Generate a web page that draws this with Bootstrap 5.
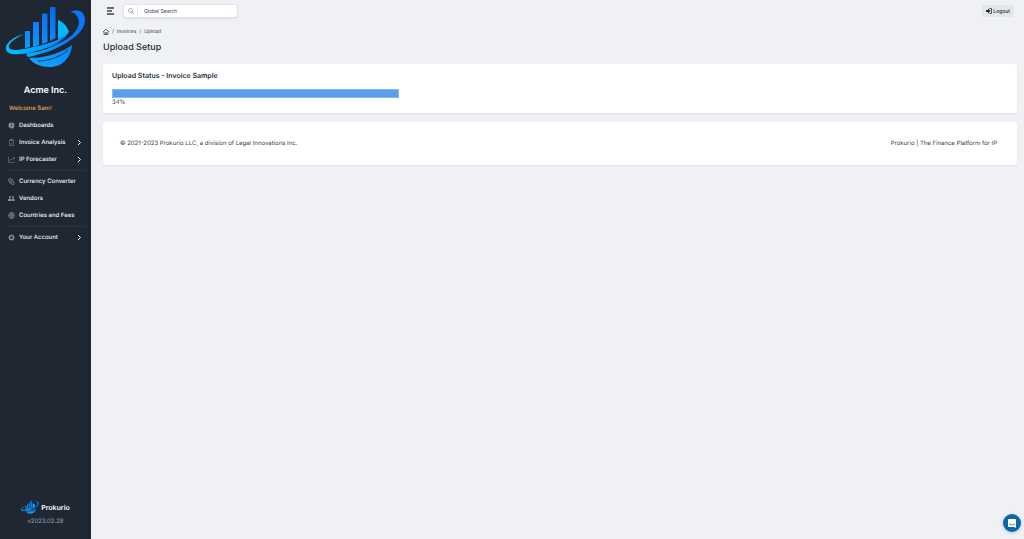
<!DOCTYPE html>
<html lang="en">
<head>
<meta charset="utf-8">
<meta name="viewport" content="width=device-width, initial-scale=1">
<title>Upload Setup</title>
<link href="https://cdn.jsdelivr.net/npm/bootstrap@5.3.0/dist/css/bootstrap.min.css" rel="stylesheet">
<style>
body{font-family:Inter,"Liberation Sans",sans-serif;font-size:6px;line-height:8px;background:#eff1f5;color:#374151;text-rendering:geometricPrecision}
a{color:inherit;text-decoration:none}
svg{display:block;flex:none}
.side{width:91px;background:#1f2733;color:#fff}
.side-logo{margin:6px 5px 0}
.brand{font-size:9px;line-height:12px;font-weight:600;margin-top:17px}
.welcome{color:#e8a857;margin:8px 9px 4px;font-weight:500}
.side-link{display:flex;align-items:center;height:17px;padding:0 8px;font-weight:500;color:#f3f4f6}
.side-link svg:first-child{width:7px;height:7px;margin-right:4px;color:#8b93a0}
.side-link .chev{width:5px;height:7px;margin-left:auto;margin-right:1px}
.rule{border-top:1px solid #2a323e;margin:2px 5px}
.brand-sm{font-size:7px;line-height:16px;font-weight:600;gap:2px}
.version{color:#9ca3af;margin:2px 0 13px}
.page{padding:4px 7px 0 12px}
.search{width:115px;height:14px;border:1px solid #dfe2e8;border-radius:3px;background:#fff;box-shadow:0 1px 2px #0001;margin-left:8px}
.search label{width:14px;border-right:1px solid #e5e7eb}
.search input{font-size:5px;line-height:8px;color:#374151;padding:0 6px;border:0;outline:0;min-width:0;background:none}
.search input::placeholder{color:#374151;opacity:1}
.menu-btn{border:0;background:none;padding:0;margin-left:3px}
.logout{font-size:5px;line-height:8px;font-weight:500;background:#e3e6eb;color:#1f2937;border:0;border-radius:3px;padding:2px 4px;height:12px;margin-right:3px}
.crumbs{font-size:5px;margin-top:10px;gap:3px}
h1{font-size:9px;line-height:12px;font-weight:500;margin:6px 0 10px;color:#262f3d}
h2{font-size:7px;line-height:10px;font-weight:600;margin:0;color:#262f3d}
.panel{background:#fff;border-radius:3px;box-shadow:0 1px 2px #0001}
.status{padding:7px 9px 6px;margin-bottom:9px}
.bar{height:9px;background:#5a9deb;border:1px solid #83b7f3;margin:8px 0 1px}
.foot{padding:18px 20px 17px 17px}
.chat{position:fixed;right:3px;bottom:7px;width:18px;height:18px;border:0;border-radius:50%;background:#0b67a8;padding:0;box-shadow:0 1px 4px #0003}
</style>
</head>
<body>
<svg width="0" height="0" class="position-absolute" aria-hidden="true">
<defs>
<linearGradient id="blue" gradientUnits="userSpaceOnUse" x1="28" y1="66" x2="60" y2="10"><stop offset="0" stop-color="#12a8ff"/><stop offset="1" stop-color="#0668f5"/></linearGradient>
<linearGradient id="ring" gradientUnits="userSpaceOnUse" x1="5" y1="50" x2="70" y2="30"><stop offset="0" stop-color="#00c2ff"/><stop offset="1" stop-color="#0878ff"/></linearGradient>
<symbol id="logo" viewBox="5 6 81 62">
<g fill="url(#blue)"><path d="M25 31h5v16l-5 1z"/><path d="M33 22h6v23l-6 2z"/><path d="M42 13.500h5.500V42L42 44z"/><path d="M50 7h5.500v31L50 41z"/></g>
<path fill="#00baff" d="M58 20c5 2 9 6 11 12-3 4-7 6-11 8z"/>
<path fill="url(#ring)" d="M25 34C14 36 5 43 6 49c1 7 14 6 26 3 14-3 27-7 37-19-12 9-26 12-40 15-9 2-18 3-20 0-2-4 6-10 16-14z"/>
<path fill="url(#ring)" d="M26 55c16-3 29-8 41-16 10-7 14-15 11-21-2-4-4-6-8-6 8-3 13-1 14.500 5 2 8-4 16-12.500 22-13 10-29 15-44 18z"/>
<path fill="url(#ring)" d="M26 53c15-1 28-5 38-14-8 9-22 14-36 16z"/>
<path fill="url(#blue)" d="M29 58c13 0 29-3 43-13-1 13-10 22-22 22-9 0-17-3-21-9z"/>
<path fill="none" stroke="#1f2733" stroke-width=".8" d="M38 61c11 0 22-4 30-11"/>
</symbol>
</defs>
</svg>
<div class="d-flex min-vh-100">
<aside class="side d-flex flex-column flex-shrink-0">
<svg width="81" height="62" class="side-logo" role="img" aria-label="Acme logo"><use href="#logo"/></svg>
<div class="brand text-center">Acme Inc.</div>
<div class="welcome">Welcome Sam!</div>
<nav>
<a class="side-link" href="#"><svg viewBox="0 0 14 14"><circle cx="7" cy="7" r="6" fill="currentColor"/><path d="M7 1v6l6 1M7 7l-4 5" fill="none" stroke="#1f2733"/></svg>Dashboards</a>
<a class="side-link" href="#"><svg viewBox="0 0 14 14" fill="none" stroke="currentColor"><path d="M3 2h8v11H3zM5 1h4v2H5zM5 9l1 2 3-4"/></svg>Invoice Analysis<svg class="chev" viewBox="0 0 5 7" fill="none" stroke="currentColor"><path d="m1 1 2.500 2.500L1 6"/></svg></a>
<a class="side-link" href="#"><svg viewBox="0 0 14 14" fill="none" stroke="currentColor"><path d="M1 1v12h12M3 9l3-3 2 2 5-5M10 3h3v3"/></svg>IP Forecaster<svg class="chev" viewBox="0 0 5 7" fill="none" stroke="currentColor"><path d="m1 1 2.500 2.500L1 6"/></svg></a>
<div class="rule"></div>
<a class="side-link" href="#"><svg viewBox="0 0 14 14" fill="none" stroke="currentColor" stroke-width="1.500"><circle cx="4" cy="4" r="3"/><rect x="7" y="7" width="5" height="6" rx="2"/><path d="M2 8l4 3M8 2l3 3"/></svg>Currency Converter</a>
<a class="side-link" href="#"><svg viewBox="0 0 14 14" fill="currentColor"><circle cx="4" cy="4" r="2"/><circle cx="10" cy="4" r="2"/><path d="M0 12V9l2-2h3l1 2v3zM7 12V9l1-2h3l2 2v3z"/></svg>Vendors</a>
<a class="side-link" href="#"><svg viewBox="0 0 14 14" fill="none" stroke="currentColor"><circle cx="7" cy="7" r="6"/><ellipse cx="7" cy="7" rx="3" ry="6"/><path d="M1 7h12M2 4h10M2 10h10M7 1v12"/></svg>Countries and Fees</a>
<div class="rule"></div>
<a class="side-link" href="#"><svg viewBox="0 0 14 14" fill="none" stroke="currentColor"><circle cx="7" cy="7" r="4" stroke-width="2.500"/><path stroke-width="2" d="M7 1v2M7 11v2M1 7h2M11 7h2M3 3l1 1M10 10l1 1M11 3l-1 1M4 10l-1 1"/></svg>Your Account<svg class="chev" viewBox="0 0 5 7" fill="none" stroke="currentColor"><path d="m1 1 2.500 2.500L1 6"/></svg></a>
</nav>
<div class="mt-auto text-center">
<div class="brand-sm d-flex justify-content-center"><svg width="18" height="14" aria-hidden="true"><use href="#logo"/></svg>Prokurio</div>
<div class="version">v2023.02.28</div>
</div>
</aside>
<main class="page flex-grow-1">
<header class="d-flex align-items-center">
<button class="menu-btn" aria-label="Toggle menu"><svg width="9" height="8" viewBox="0 0 9 8" stroke="#374151" stroke-width="1.300"><path d="M1 1h7M1 4h5M1 7h7"/></svg></button>
<form class="search d-flex">
<label for="q" class="d-flex align-items-center justify-content-center flex-shrink-0" aria-label="Search"><svg width="6" height="6" viewBox="0 0 12 12" fill="none" stroke="#6b7280" stroke-width="1.200"><circle cx="5" cy="5" r="4"/><path d="m8 8 4 4"/></svg></label>
<input id="q" class="flex-grow-1" type="search" placeholder="Global Search">
</form>
<button class="logout ms-auto d-flex align-items-center"><svg width="6" height="6" viewBox="0 0 12 12"><path fill="#1f2937" d="M0 4h4V1l5 5-5 5V8H0z"/><path d="M7 1h4v10H7" fill="none" stroke="#1f2937" stroke-width="1.500"/></svg>&nbsp;Logout</button>
</header>
<nav class="crumbs d-flex" aria-label="breadcrumb"><a href="#" aria-label="Home"><svg width="6" height="7" viewBox="0 0 12 14" fill="none" stroke="#374151" stroke-width="1.500"><path d="m0 8 6-6 6 6M2 7v6h8V7M5 13V9h2v4"/></svg></a><span>/</span><a href="#">Invoices</a><span>/</span><a href="#">Upload</a></nav>
<h1>Upload Setup</h1>
<section class="panel status">
<h2>Upload Status - Invoice Sample</h2>
<div class="bar" role="progressbar" aria-label="Upload" aria-valuenow="34" aria-valuemin="0" aria-valuemax="100" style="width:32%"></div>
<div>34%</div>
</section>
<footer class="panel foot d-flex justify-content-between"><span>© 2021-2023 Prokurio LLC, a division of Legal Innovations Inc.</span><span>Prokurio | The Finance Platform for IP</span></footer>
</main>
</div>
<button class="chat" aria-label="Open chat"><svg width="18" height="18" viewBox="0 0 18 18"><path fill="#fff" d="M6 5h6q1 0 1 1v8l-2-1H6q-1 0-1-1V6q0-1 1-1z"/><path d="M6 10q3 2 6 0" fill="none" stroke="#0b67a8" stroke-width=".7"/></svg></button>
<script src="https://cdn.jsdelivr.net/npm/bootstrap@5.3.0/dist/js/bootstrap.bundle.min.js"></script>
</body>
</html>
